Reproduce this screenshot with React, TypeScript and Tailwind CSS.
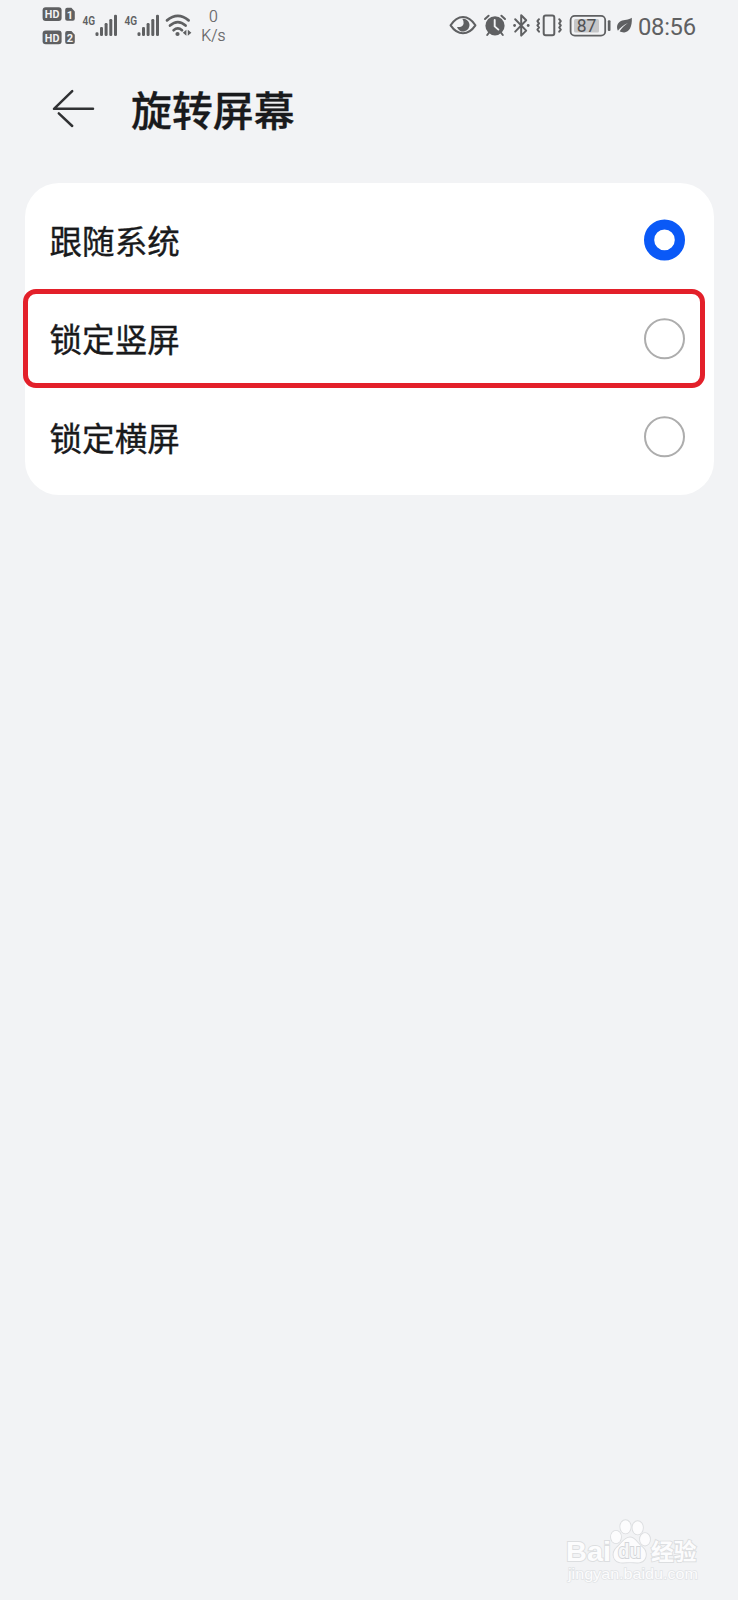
import type { ReactNode } from "react";

const INK = "#5f6062";

function StatusIcon({ x, width, className, children }: { x: number; width: number; className: string; children: ReactNode }) {
  return (
    <svg viewBox={`${x} 0 ${width} 50`} width={width} height={50} className={`shrink-0 overflow-visible ${className}`} fill={INK} stroke="none">
      {children}
    </svg>
  );
}

function SimBadge({ y, slot }: { y: number; slot: string }) {
  return (
    <g>
      <rect x="42.6" y={y} width="19" height="13.6" rx="3" />
      <text x="52.1" y={y + 11} textAnchor="middle" fill="#f2f3f5" fontSize="11.6" fontWeight="700" textLength="14.6" lengthAdjust="spacingAndGlyphs" fontFamily="Roboto, sans-serif">HD</text>
      <path d={`M65.2 ${y + 2.4}q0-1.9 1.9-1.9h4.3l3.4 3.7v7.3q0 1.9-1.9 1.9h-5.8q-1.9 0-1.9-1.9z`} />
      <text x="70" y={y + 11.2} textAnchor="middle" fill="#f2f3f5" fontSize="11" fontWeight="700" fontFamily="Roboto, sans-serif">{slot}</text>
    </g>
  );
}

function Signal({ className }: { className: string }) {
  return (
    <StatusIcon x={0} width={36} className={className}>
      <text x="-0.4" y="24.6" fontSize="13.6" fontWeight="600" textLength="12.6" lengthAdjust="spacingAndGlyphs" fontFamily="Roboto, sans-serif">4G</text>
      <rect x="12.5" y="32.2" width="3" height="3.8" rx="1.3" />
      <rect x="17" y="27" width="3" height="9" rx="1.3" />
      <rect x="21.6" y="23" width="3" height="13" rx="1.3" />
      <rect x="26.3" y="19" width="3" height="17" rx="1.3" />
      <rect x="31" y="14.8" width="3" height="21.2" rx="1.3" />
    </StatusIcon>
  );
}

function StatusBar() {
  return (
    <header className="flex h-[50px] items-center pl-[43px] text-[#5f6062]">
      <StatusIcon x={43} width={34} className="mr-[6px]">
        <SimBadge y={7.3} slot="1" />
        <SimBadge y={30.6} slot="2" />
      </StatusIcon>
      <Signal className="mr-[6px]" />
      <Signal className="mr-[3px]" />
      <StatusIcon x={164} width={30} className="mr-[7px]">
        <g fill="none" stroke={INK} strokeWidth="2.7" strokeLinecap="round">
          <path d="M167 20.4Q177.8 11.4 188.6 20.4" />
          <path d="M170 25.6Q177.8 18.8 185.6 25.6" />
          <path d="M173.6 30.2Q177.8 26.6 182 30.2" />
        </g>
        <circle cx="177.5" cy="34" r="2.1" />
        <path d="M186.4 29.8v6l-3.6-3zM187.8 29.8v6l3.6-3z" />
      </StatusIcon>
      <div className="flex w-[25px] flex-col items-center pt-[3px] font-[Roboto,sans-serif] text-[15.8px] font-light leading-[18.5px] [-webkit-text-stroke:0.2px_#5f6062]">
        <span>0</span>
        <span>K/s</span>
      </div>
      <div className="ml-auto flex items-center pr-[42px]">
        <StatusIcon x={447} width={30} className="mr-[5px]">
          <path d="M450.6 25.3Q456 17 463 17T475.4 25.3Q470 33.2 463 33.2T450.6 25.3z" fill="none" stroke={INK} strokeWidth="2.1" strokeLinejoin="round" />
          <path d="M462.3 18.8A6.4 6.4 0 1 1 457 27Q463.2 27.2 463.6 23.4Q463.6 20.5 462.3 18.8z" />
        </StatusIcon>
        <StatusIcon x={482} width={25} className="mr-[4px]">
          <circle cx="495" cy="25.8" r="9.6" />
          <path d="M485 19l3.6-3.3M505 19l-3.6-3.3M489.5 32l-2.3 3M500.5 32l2.3 3" stroke={INK} strokeWidth="2" strokeLinecap="round" />
          <path d="M494.7 20v6.4l3.7 3.2" fill="none" stroke="#f2f3f5" strokeWidth="1.9" strokeLinecap="round" />
        </StatusIcon>
        <StatusIcon x={511} width={20} className="mr-[3px]">
          <path d="M515.2 19.3l11 11.3-5 5V15.2l5 5.1-11 11.3" fill="none" stroke={INK} strokeWidth="2" strokeLinecap="round" strokeLinejoin="round" />
          <circle cx="514.6" cy="25.5" r="1.4" />
          <circle cx="528.2" cy="25.5" r="1.4" />
        </StatusIcon>
        <StatusIcon x={534} width={28} className="mr-[6px]">
          <g fill="none" stroke={INK} strokeWidth="2" strokeLinecap="round" strokeLinejoin="round">
            <rect x="543.7" y="15.6" width="10.6" height="19.6" rx="2" />
            <path d="M539 19.2l-1.6 2 1.6 2.1-1.6 2.1 1.6 2.1-1.6 2.1 1.6 2" />
            <path d="M559.2 19.2l1.6 2-1.6 2.1 1.6 2.1-1.6 2.1 1.6 2.1-1.6 2" />
          </g>
        </StatusIcon>
        <StatusIcon x={568} width={43} className="mr-[4px]">
          <rect x="570.6" y="15.8" width="34.6" height="19.8" rx="4.2" fill="none" stroke={INK} strokeWidth="1.8" />
          <rect x="574" y="19" width="25" height="13.4" rx="1.5" fill="#c5c6c8" />
          <rect x="607.8" y="20.3" width="2.7" height="10.8" rx="1" />
          <text x="586.6" y="32" textAnchor="middle" fontSize="17.5" fontWeight="400" fill="#505153" fontFamily="Roboto, sans-serif">87</text>
        </StatusIcon>
        <StatusIcon x={615} width={18} className="mr-[5px]">
          <path d="M631.8 17.8C632.4 27 629 32.6 624 32.4C622 32.3 620.8 31.9 619.7 31.3C621.5 28 624.6 25.2 628 22.9C623.6 24.9 620.3 27.4 617.9 30.7C616.1 26.8 617.4 22.9 621 21.1C624.3 19.4 628.5 20.3 631.8 17.8z" />
        </StatusIcon>
        <time className="w-[58px] pt-[3px] font-[Roboto,sans-serif] text-[23.8px] leading-[24px] tracking-[-0.3px] whitespace-nowrap">08:56</time>
      </div>
    </header>
  );
}

const options = [
  { label: "跟随系统", selected: true, marked: false },
  { label: "锁定竖屏", selected: false, marked: true },
  { label: "锁定横屏", selected: false, marked: false },
];

function Radio({ selected }: { selected: boolean }) {
  return (
    <svg width="41" height="41" viewBox="0 0 41 41" className="shrink-0 overflow-visible" fill="none">
      {selected ? <circle cx="20.5" cy="20.9" r="15.4" stroke="#0a59f7" strokeWidth="10.2" /> : <circle cx="20.5" cy="20.8" r="19.5" stroke="#adadad" strokeWidth="2" />}
    </svg>
  );
}

function Watermark() {
  return (
    <svg className="absolute top-[1515px] left-[560px]" width="145" height="70" viewBox="560 1515 145 70" fill="#fcfcfd" stroke="#dcdee0" strokeWidth="1.8" paintOrder="stroke">
      <text x="566" y="1560.5" fontSize="28.5" fontWeight="700" textLength="45" lengthAdjust="spacingAndGlyphs" fontFamily="Liberation Sans, sans-serif">Bai</text>
      <ellipse cx="616" cy="1537" rx="5" ry="6.2" />
      <ellipse cx="625.5" cy="1526.8" rx="5.2" ry="6.6" />
      <ellipse cx="637.7" cy="1527.8" rx="5.2" ry="6.6" />
      <ellipse cx="645" cy="1539.3" rx="5" ry="6.2" />
      <path d="M630 1537.5C635 1537.5 637 1543 642 1547C649 1553 646 1563 637 1562.5C632 1562 628 1562 623 1562.5C613 1563 611 1553 617 1547.5C622 1543 625 1537.5 630 1537.5z" />
      <text x="618" y="1558" fontSize="19.5" fontWeight="700" textLength="23" lengthAdjust="spacingAndGlyphs" fontFamily="Liberation Sans, sans-serif" fill="#f6f7f8" stroke="#d3d5d8">du</text>
      <text x="651" y="1559.5" fontSize="22.8" fontWeight="700" fontFamily="Noto Sans CJK SC, sans-serif">经验</text>
      <text x="568" y="1579.3" fontSize="15" textLength="130" lengthAdjust="spacingAndGlyphs" fontFamily="Liberation Sans, sans-serif" stroke="#e1e3e5" strokeWidth="1.3">jingyan.baidu.com</text>
    </svg>
  );
}

export default function App() {
  return (
    <div className="relative h-[1600px] w-[738px] overflow-hidden bg-[#f2f3f5] font-['Noto_Sans_CJK_SC',sans-serif]">
      <StatusBar />
      <div className="flex h-[132px] items-start pt-[28px] pl-[52px]">
        <svg width="44" height="62" viewBox="52 78 44 62" fill="none" stroke="#303133" strokeWidth="2.5" strokeLinecap="round" strokeLinejoin="round">
          <path d="M72.2 91.2L54 108.8H93M58.8 113.3L72.2 126" />
        </svg>
        <h1 className="ml-[35px] text-[40.9px] leading-[62px] font-medium text-[#191a1c] [-webkit-text-stroke:0.3px_#191a1c]">旋转屏幕</h1>
      </div>
      <main className="mx-[24.5px] mt-[0.5px] flex h-[312px] flex-col rounded-[34px] bg-white pt-[8px]">
        {options.map((option) => (
          <div key={option.label} className="relative flex h-[98.5px] items-center justify-between pr-[29px] pl-[25px]">
            <span className="text-[32.6px] leading-[48px] text-[#191a1c] [-webkit-text-stroke:0.35px_#191a1c]">{option.label}</span>
            <Radio selected={option.selected} />
            {option.marked && <div className="absolute top-[-0.5px] left-[-1.5px] h-[99.5px] w-[682px] rounded-[13px] border-5 border-[#e3202a]" />}
          </div>
        ))}
      </main>
      <Watermark />
    </div>
  );
}
